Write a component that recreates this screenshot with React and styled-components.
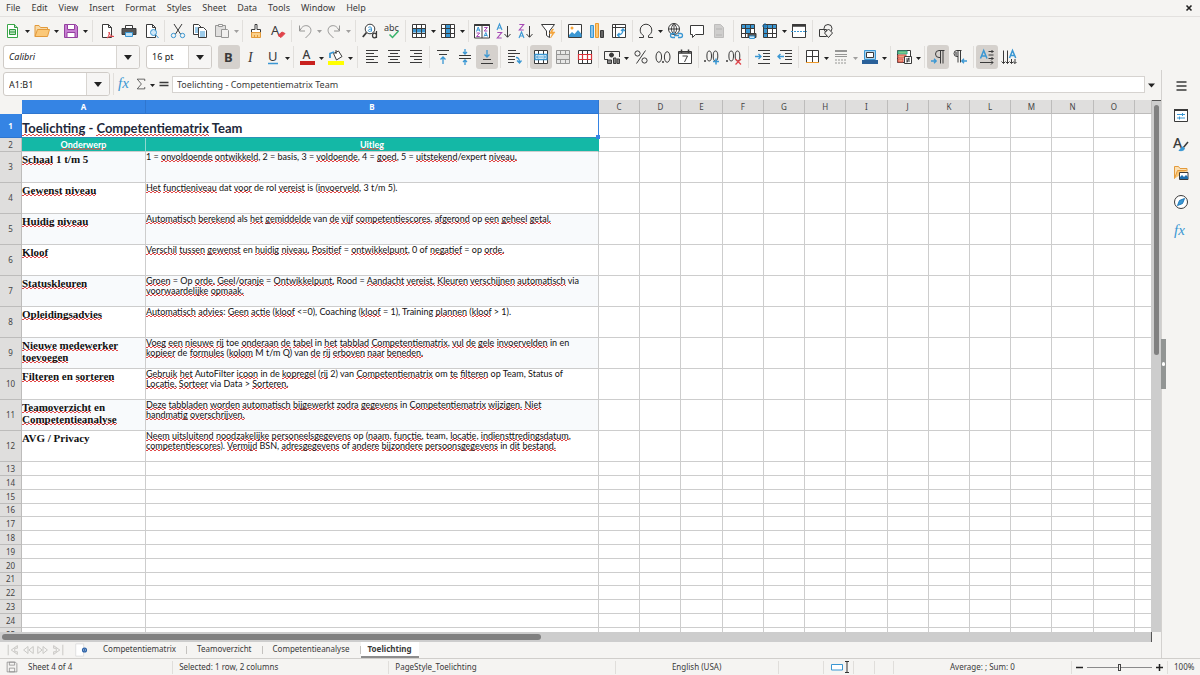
import React from "react";
import styled, { createGlobalStyle, css } from "styled-components";

const ui = '"Noto Sans", "Open Sans", sans-serif';
const ink = "#3a3a3a";
const blue = "#3a97d3";
const line = "#cdcdcd";

const Global = createGlobalStyle`
  *, *::before, *::after { box-sizing: border-box; }
  body { margin: 0; background: #f5f4f2; color: ${ink}; font: 9px/12px ${ui}; overflow: hidden; }
  button, input, select { font: inherit; color: inherit; margin: 0; }
  button { border: 0; padding: 0; background: none; }
  svg { overflow: visible; }
`;

const Window = styled.div`
  display: flex;
  flex-direction: column;
  height: 100vh;
`;

const MenuBar = styled.nav`
  display: flex;
  align-items: center;
  height: 17px;
  padding: 0 5px 0 1px;
  border-bottom: 1px solid #e3e1df;
`;

const MenuItem = styled.button`
  padding: 0 6px 0 5px;
`;

const CloseButton = styled.button`
  margin-left: auto;
  width: 12px;
  height: 12px;
  display: flex;
  align-items: center;
  justify-content: center;
`;

const Toolbar = styled.div`
  display: flex;
  align-items: center;
  height: ${(p) => p.$height}px;
  padding-left: ${(p) => p.$inset}px;
`;

const ToolButton = styled.button`
  display: flex;
  flex: none;
  align-items: center;
  justify-content: center;
  width: ${(p) => p.$width || 22}px;
  height: 24px;
  border-radius: 3px;
  background: ${(p) => (p.$pressed ? "#d5d1cd" : "none")};
  opacity: ${(p) => (p.$faded ? 0.5 : 1)};
`;

const ArrowButton = styled.button`
  flex: none;
  display: flex;
  align-items: center;
  justify-content: center;
  width: 7px;
  height: 24px;
  padding-top: 2px;
  opacity: ${(p) => (p.$faded ? 0.4 : 1)};
`;

const Separator = styled.span`
  flex: none;
  width: ${(p) => (p.$wide ? 7 : 5)}px;
  height: 22px;
  background: linear-gradient(#e1dfdc, #e1dfdc) center / 1px 100% no-repeat;
`;

const ComboBox = styled.label`
  position: relative;
  flex: none;
  width: ${(p) => p.$width}px;
  height: 24px;
  margin-right: ${(p) => p.$gap || 0}px;
  border: 1px solid #cfcbc7;
  border-radius: 3px;
  background: #fff;
  overflow: hidden;

  select, input {
    appearance: none;
    width: 100%;
    height: 100%;
    padding: 0 24px 0 5px;
    border: 0;
    outline: 0;
    background: none;
    color: #222;
    font-style: ${(p) => (p.$italic ? "italic" : "normal")};
  }
`;

const ComboArrow = styled.span`
  position: absolute;
  inset: 0 0 0 auto;
  width: 23px;
  display: flex;
  align-items: center;
  justify-content: center;
  border-left: 1px solid #d8d5d1;
  background: #f6f5f4;
  pointer-events: none;
`;

const Body = styled.div`
  display: flex;
  flex: 1;
  min-height: 0;
`;

const Main = styled.main`
  display: flex;
  flex: 1;
  flex-direction: column;
  min-width: 0;
`;

const FormulaBar = styled.div`
  display: flex;
  align-items: center;
  height: 30px;
  padding: 0 6px 2px 3px;
`;

const FormulaInput = styled.input`
  flex: 1;
  min-width: 0;
  height: 17px;
  padding: 0 4px;
  margin-right: 3px;
  border: 1px solid #d6d3d0;
  outline: 0;
  background: #fff;
`;

const SheetArea = styled.div`
  display: flex;
  flex: 1;
  min-height: 0;
`;

const SheetView = styled.div`
  flex: 1;
  min-width: 0;
  overflow: hidden;
  background: #fff;
`;

const Grid = styled.table`
  width: 100%;
  table-layout: fixed;
  border-collapse: separate;
  border-spacing: 0;
`;

const Col = styled.col`
  width: ${(p) => p.$width}px;
`;

const Corner = styled.td`
  padding: 0;
  background: #f5f4f2;
`;

const headCell = css`
  padding: 0;
  border: 0 solid ${(p) => (p.$active ? "#2f76cf" : "#bdbcbb")};
  border-width: 0 1px 1px 0;
  background: ${(p) => (p.$active ? "#3584e4" : "#dfdedd")};
  color: ${(p) => (p.$active ? "#fff" : "#444")};
  font-weight: ${(p) => (p.$active ? 700 : 400)};
  text-align: center;
  overflow: hidden;
`;

const ColumnHead = styled.th`
  ${headCell}
  height: 14px;
  font-size: 8px;
  line-height: 12px;
`;

const RowHead = styled.th`
  ${headCell}
  height: ${(p) => p.$height}px;
  font-size: 8px;
  line-height: 12px;
`;

const Cell = styled.td`
  padding: 0;
  border: 0 solid ${line};
  border-width: 0 1px 1px 0;
  overflow: hidden;
`;

const TitleCell = styled(Cell)`
  position: relative;
  border-right: 1px solid #3584e4;
  border-bottom-color: #2a93b8;
  padding: 6px 0 0 0;
  overflow: visible;
  vertical-align: top;
  color: #1e293b;
  font: 700 13px/17px Lato, sans-serif;
  white-space: nowrap;

  &::after {
    content: "";
    position: absolute;
    right: -2px;
    bottom: -2px;
    width: 4px;
    height: 4px;
    background: #3584e4;
  }
`;

const BandCell = styled(Cell)`
  border-right-color: ${(p) => (p.$divided ? "#8fd8cf" : "#14b8a6")};
  background: #14b8a6;
  color: #fff;
  font: 700 9px/12px Lato, sans-serif;
  text-align: center;
`;

const TopicCell = styled(Cell)`
  padding: 1px 0 0 0;
  vertical-align: top;
  background: ${(p) => (p.$striped ? "#f8fafc" : "#fff")};
  color: #111;
  font: 700 11px/12px "Liberation Serif", serif;
  white-space: nowrap;
`;

const TextCell = styled(Cell)`
  padding: 0;
  vertical-align: top;
  background: ${(p) => (p.$striped ? "#f8fafc" : "#fff")};
  color: #111;
  font: 9px/10px Lato, sans-serif;
  white-space: nowrap;
`;

const Misspelt = styled.span`
  background:
    linear-gradient(90deg, #e04848 50%, transparent 50%) 0 100% / 4px 1px repeat-x,
    linear-gradient(90deg, #e04848 50%, transparent 50%) 2px calc(100% - 1px) / 4px 1px repeat-x;
`;

const VerticalTrack = styled.div`
  width: 9px;
  padding: 0 2px;
  border-top: 1px solid #555;
  background: #cdcdcd;
`;

const HorizontalTrack = styled.div`
  flex: none;
  height: 10px;
  margin-right: 9px;
  padding: 2px;
  border-right: 1px solid #555;
  background: #cdcdcd;
`;

const Thumb = styled.div`
  width: ${(p) => p.$width};
  height: ${(p) => p.$height};
  margin-top: ${(p) => p.$top || 0}px;
  border-radius: 3px;
  background: #808080;
`;

const TabBar = styled.div`
  display: flex;
  flex: none;
  align-items: stretch;
  height: 16px;
  padding-left: 5px;
  font-size: 8px;
`;

const NavButton = styled.button`
  display: flex;
  align-items: center;
  justify-content: center;
  width: 15px;
`;

const AddSheet = styled.button`
  display: flex;
  align-items: center;
  width: 28px;
  padding-left: 9px;
`;

const SheetTab = styled.button`
  padding: 0 ${(p) => (p.$active ? 7 : 10)}px;
  border-bottom: 2px solid ${(p) => (p.$active ? "#8d8d8d" : "transparent")};
  font-weight: ${(p) => (p.$active ? 700 : 400)};
  background: ${(p) => (p.$active ? "#fff" : "none")};
`;

const TabDivider = styled.span`
  width: 1px;
  height: 8px;
  margin-top: 4px;
  background: #c4c2bf;
`;

const Sidebar = styled.aside`
  position: relative;
  display: flex;
  flex: none;
  flex-direction: column;
  align-items: center;
  gap: 5px;
  width: 39px;
  padding-top: 4px;
  border-left: 1px solid #d3d1cf;
`;

const SideHandle = styled.button`
  position: absolute;
  left: -1px;
  top: calc(50% - 25px);
  width: 5px;
  height: 50px;
  background: #929594;
  color: #fff;

  &::before {
    content: "";
    display: block;
    width: 3px;
    height: 4px;
    margin: 0 auto;
    border-radius: 2px;
    background: #fff;
  }
`;

const StatusBar = styled.footer`
  display: grid;
  flex: none;
  grid-template-columns: 22px 151fr 216fr 226fr 163fr 45fr 30fr 21fr 19fr 178fr 96px 32px;
  align-items: center;
  height: 17px;
  border-top: 1px solid #d0cecb;
  font-size: 8px;
`;

const StatusField = styled.div`
  display: flex;
  align-items: center;
  justify-content: ${(p) => (p.$center ? "center" : "flex-start")};
  height: 13px;
  padding-left: ${(p) => (p.$center ? 0 : 6)}px;
  border-right: 1px solid ${(p) => (p.$open ? "transparent" : "#e0dedb")};
  white-space: nowrap;
`;

const ZoomGroup = styled.div`
  display: flex;
  align-items: center;
  justify-content: center;
  gap: 4px;
  height: 13px;
  border-right: 1px solid #e0dedb;
`;

const ZoomButton = styled.button`
  width: 7px;
  height: 12px;
  display: flex;
  align-items: center;
`;

const ZoomSlider = styled.input`
  appearance: none;
  width: 65px;
  height: 8px;
  background: linear-gradient(#8b8b8b, #8b8b8b) center / 100% 1px no-repeat;

  &::-webkit-slider-thumb {
    appearance: none;
    width: 3px;
    height: 7px;
    border: 1px solid #444;
    background: #f5f4f2;
  }
`;

const Svg = ({ size = 16, children }) => (
  <svg width={size} height={size} viewBox="0 0 16 16" fill="none" stroke={ink} strokeWidth="1" aria-hidden="true">
    {children}
  </svg>
);

const Letter = ({ x, y, size, color = ink, weight = 400, family = "Noto Sans", italic, children }) => (
  <text x={x} y={y} fontSize={size} fill={color} stroke="none" fontWeight={weight} fontFamily={family} fontStyle={italic ? "italic" : "normal"}>
    {children}
  </text>
);

const Triangle = ({ size = 5 }) => (
  <svg width={size} height={size === 5 ? 3 : 5} viewBox="0 0 10 6" aria-hidden="true">
    <path d="M0 0h10L5 6z" fill="#222" />
  </svg>
);

const page = <path d="M3.5 1.5h6l3 3v10h-9z M9.5 1.5v3h3" fill="#fff" />;
const sheetLines = "M1.5 1.5h13v13h-13z M1.5 5.5h13 M1.5 10.5h13 M5.5 1.5v13 M10.5 1.5v13";
const grid = <path d={sheetLines} />;
const paper = <path d="M1.5 1.5h13v13h-13z" fill="#fff" stroke="none" />;

const icons = {
  new: <><path d="M2.5 1.5h7l3 3v10h-10z" fill="#fff" stroke="#3aa648" /><path d="M9.5 1.5v3h3M4.5 6.5h6v5h-6zM4.5 9h6" stroke="#2f9a3f" fill="#b9e3bf" /></>,
  open: <><path d="M1 13.5V2.5h4l1.5 2H13.5V7" stroke="#e39a3b" fill="#f7d9a6" /><path d="M1 13.5L3.5 6.5h12L13.5 13.5z" stroke="#e39a3b" fill="#fbc878" /></>,
  save: <><path d="M1.5 1.5h11l2 2v11h-13z" fill="#c77ed2" stroke="#94409f" /><path d="M4.5 1.5h7v5h-7z M4 9.5h8v5H4z" fill="#fff" stroke="#94409f" /></>,
  pdf: <>{page}<path d="M8 15c2-2 2.5-4 2-6 .5 3 2 4.5 5 4.5-3-.5-5 0-7 1.5z" stroke="#e0444b" fill="#fff" /></>,
  print: <><path d="M4.5 2.5h7v3h-7z" fill="#fff" /><path d="M1 5.500h14v6H1z" fill="#555" /><path d="M4.5 9.5h7v4h-7z" fill="#bfe0f5" stroke={blue} /></>,
  preview: <>{page}<circle cx="10.5" cy="9.5" r="3" fill="#cfe7f8" stroke={blue} /><path d="M12.5 11.5L15.5 15" stroke={blue} /></>,
  cut: <><path d="M4 1l6.5 10M12 1L5.5 11" /><circle cx="3.5" cy="12.5" r="2.2" stroke={blue} /><circle cx="12.5" cy="12.5" r="2.2" stroke={blue} /></>,
  copy: <><path d="M1.5 1.5h5l2.5 2.5v7.5H1.500z" fill="#fff" /><path d="M6.5 4.5h5l3 3v7h-8z" fill="#fff" /><path d="M3 5h3M3 7h3M3 9h3M8 9h5M8 11h5M8 13h5" stroke={blue} /></>,
  paste: <><path d="M1.5 2.5h10v11h-10z" fill="#ccc" /><path d="M4.5 1.5h4v2h-4z" fill="#fff" /><path d="M7.5 6.5h6l1 1v7h-7z" fill="#eee" /></>,
  clone: <><path d="M7 1.5h2v5h3.500v3h-9v-3H7z" fill="#fff" /><path d="M3.5 9.5h9v5h-9z" fill="#fbd08a" stroke="#e39a3b" /><path d="M6.5 12v2.5M9.5 12v2.5" stroke="#e39a3b" /></>,
  clear: <><Letter x="1" y="12" size="13">A</Letter><path d="M8 12.5l4-3.500 3 1.500-4 4z" fill="#e0444b" stroke="#e0444b" /></>,
  undo: <path d="M2.5 2.5v5.500h5.500M3 7.500c2-4.500 5-5.500 8-4.500s4 5 1.500 8L8.500 15" />,
  redo: <path d="M13.5 2.500v5.500H8M13 7.500c-2-4.500-5-5.500-8-4.500s-4 5-1.500 8L7.500 15" />,
  find: <><circle cx="8" cy="6" r="4.8" fill="#fff" /><path d="M4.5 9.5L.8 14" strokeWidth="1.8" /><path d="M6.300 4.500c1-1 3.200-.8 3.200.8V8.500M9.500 6c-3.500-.2-4 2.500-2 2.500 1 0 2-.7 2-1.500" stroke={blue} /><path d="M14.500 8v7M14.500 12.500a2 2.300 0 1 0-4 0 2 2.300 0 1 0 4 0" strokeWidth="1.200" /></>,
  spell: <><Letter x="0" y="7.5" size="9">abc</Letter><path d="M5.5 11.5l3 3 6-6.500" stroke="#38b36b" strokeWidth="1.5" /></>,
  row: <>{paper}<path d="M1.5 5.5h13v3.500h-13z" fill={blue} stroke={blue} />{grid}</>,
  column: <>{paper}<path d="M6 1.5h3.500v13H6z" fill={blue} stroke={blue} />{grid}</>,
  sort: <><path d="M.5 1.5h15v13.5H.5z M8 2v13" fill="#fff" /><path d="M.5 2h15" strokeWidth="2" /><path d="M2.500 8.500l1.700-4.500L6 8.500M3 7h2.500M10 13.500L11.800 9.500l1.700 4M10.500 12.500h2.500" stroke={blue} /><path d="M2.500 10h3.200l-3.200 3.500h3.200M10.200 4.500h3.200l-3.200 3.500h3.200" stroke="#a64ab5" /></>,
  ascending: <><path d="M1 7l2.500-6L6 7M1.800 5h3.400" stroke={blue} strokeWidth="1.100" /><path d="M1.300 9.500h4.400L1.300 15h4.400" stroke="#a64ab5" strokeWidth="1.100" /><path d="M11.5 3v11M8.500 11l3 3.3 3-3.3" /></>,
  descending: <><path d="M1 15l2.500-6L6 15M1.800 13h3.400" stroke={blue} strokeWidth="1.100" /><path d="M1.300 1.500h4.400L1.300 7h4.400" stroke="#a64ab5" strokeWidth="1.100" /><path d="M11.5 3v11M8.500 11l3 3.300 3-3.300" /></>,
  filter: <><path d="M1.5 1.5h13L9.5 8v6.5l-3-2V8z" fill="#fff" /><path d="M12.5 6l-3 4.500h3l-2 4.500 4.500-6h-3l1.500-3z" fill="#f7a53b" stroke="#ee9a2b" strokeWidth=".5" /></>,
  image: <><path d="M1.5 1.5h13v13h-13z" fill="#fff" /><circle cx="5" cy="5" r="1.5" fill="#f7a53b" stroke="none" /><path d="M2 14v-2l3-3 2.5 2L11 7l3.5 4v3z" fill={blue} stroke="none" /></>,
  chart: <><path d="M1.5 2.500h3v12h-3z" fill="#8cc4ea" stroke={blue} /><path d="M6.5 .5h3v14h-3z" fill="#fbc878" stroke="#ee9a2b" /><path d="M11.5 7.500h3v7h-3z" fill="#666" /></>,
  pivot: <><path d="M1.5 1.5h13v13h-13z M1.5 4.5h13 M4.5 1.5v13" fill="#fff" /><path d="M12 6.5C12 10 10 12 6.5 12M10 8l2-2 2 2M8.5 10l-2 2 2 2" stroke={blue} strokeWidth="1.3" /></>,
  omega: <path d="M1 14.5h4.5v-2C3.5 11.5 2.2 9.5 2.2 7a5.800 5.800 0 0 1 11.600 0c0 2.500-1.300 4.500-3.300 5.500v2H15" />,
  link: <><circle cx="7" cy="6" r="5.5" fill="#fff" /><path d="M1.5 6h11M7 .5v11M7 .5C3.5 4 3.5 8 7 11.5M7 .5c3.500 3.500 3.500 7.500 0 11" /><path d="M8 10.5H5.5a2 2 0 0 0 0 4H8M11 10.5h2.500a2 2 0 0 1 0 4H11M7 12.5h5" stroke={blue} strokeWidth="1.3" /></>,
  comment: <path d="M1.5 2.5h13v9h-8l-3 3v-3h-2z" fill="#fff" />,
  header: <><path d="M3.5 1.5h6l3 3v10h-9z" fill="#aaa" stroke="#888" /><path d="M5 6h6M5 12h6" stroke="#777" /></>,
  area: <>{paper}<path d="M1.5 1.500h13v4h-13zM5.500 5.500h5v5h-5z" fill={blue} stroke="none" />{grid}<path d="M8 10.500h8v4H8z" fill="#555" /><path d="M9.5 13h5v2.5h-5z" fill="#cfe7f8" stroke={blue} /></>,
  freeze: <>{paper}<path d="M1.5 1.500h13v4h-13zM1.500 5.500h4v9h-4z" fill={blue} stroke="none" />{grid}<path d="M3 0v6M0 3h6" stroke="#1f78b8" /></>,
  split: <><path d="M1.5 1.5h13v13h-13z" fill="#fff" /><path d="M1 2.500h14" strokeWidth="2.5" /><path d="M0 8.5h16" stroke={blue} strokeDasharray="2 1" /></>,
  shapes: <><path d="M1.5 6.5h7v7h-7z" /><circle cx="10" cy="5.5" r="4" /><path d="M10.5 6l4 4-4 4.5-4-4.500z" fill="#f5f4f2" /></>,
  bold: <Letter x="3" y="13" size="13" weight="700">B</Letter>,
  italic: <Letter x="5" y="13" size="14" family="Liberation Serif" italic>I</Letter>,
  underline: <><Letter x="3" y="12" size="13">U</Letter><path d="M3 14.5h10" stroke={blue} strokeWidth="1.5" /></>,
  fontColor: <><Letter x="3.5" y="10" size="12" weight="500">A</Letter><path d="M1 14h15" stroke="#c9211e" strokeWidth="4" /></>,
  highlight: <><path d="M5.5 4.5l5-2.500 3.500 5.500-5.500 3.500z M8 1v4" fill="#fff" /><path d="M2 9V4.500L6 3" stroke={blue} strokeWidth="1.8" /><path d="M0 14h16" stroke="#ffff00" strokeWidth="4" /></>,
  left: <path d="M2 1.5h12M2 4.5h8M2 7.5h12M2 10.5h8M2 13.5h12" />,
  center: <path d="M2 1.5h12M4 4.5h8M2 7.5h12M4 10.5h8M2 13.5h12" />,
  right: <path d="M2 1.5h12M6 4.5h8M2 7.5h12M6 10.5h8M2 13.5h12" />,
  top: <><path d="M2 1.5h12M4 5.5h8" /><path d="M8 15V8M5.500 10.500L8 8l2.500 2.500" stroke={blue} strokeWidth="1.3" /></>,
  middle: <><path d="M2 6.5h12M2 9.5h12" /><path d="M8 0v5M6 3l2 2 2-2M8 16v-5M6 13l2-2 2 2" stroke={blue} strokeWidth="1.3" /></>,
  bottom: <><path d="M2 14.5h12M4 10.5h8" /><path d="M8 1v7M5.500 5.500L8 8l2.500-2.500" stroke={blue} strokeWidth="1.3" /></>,
  wrap: <><path d="M2 1.5h8M2 4.5h12M2 7.5h7M2 10.5h7M2 13.5h6" /><path d="M10 8.500c3 0 3.500 2 3.500 5M11 11.500l2.500 2.500 2-2.500" stroke={blue} strokeWidth="1.3" /></>,
  merge: <><path d={sheetLines} fill="#fff" /><path d="M2 5.500h12v5H2z" fill="#fff" stroke={blue} strokeWidth="1.3" /><path d="M3.5 8h9M5 6.500L3.5 8 5 9.500M11 6.500L12.500 8 11 9.500" stroke={blue} /></>,
  mergeCells: <><path d={sheetLines} fill="#ddd" /><path d="M2 6h12v4H2z" fill="#ccc" stroke="none" /></>,
  unmerge: <><path d="M1.5 1.5h13v13h-13z M5.5 1.5v13M10.5 1.5v13" fill="#fff" /><path d="M1.5 5.5h13v5h-13z M5.5 5.5v5M10.5 5.5v5" stroke="#d9333a" strokeWidth="1.2" /></>,
  currency: <><path d="M15.5 8V2.500H.5v8H4" /><circle cx="7.5" cy="6" r="2" fill={ink} /><path d="M3.5 11h4v3.500h-4z M9.5 9h2.500v5.500H9.500z M13 10h2.500v4.500H13z" fill="#888" /></>,
  percent: <><circle cx="4.5" cy="4.5" r="2.6" /><circle cx="11.5" cy="11.5" r="2.6" /><path d="M12.5 1.5l-9 13" /></>,
  number: <><ellipse cx="3.8" cy="8" rx="2.8" ry="5.3" /><ellipse cx="12.2" cy="8" rx="2.8" ry="5.3" /><path d="M8 12v2" strokeWidth="1.5" /></>,
  date: <><path d="M1.5 2.5h13v12h-13z" fill="#fff" /><path d="M1.5 4h13M4.5 .5v3M11.5 .5v3" strokeWidth="1.5" /><path d="M5.5 7h5l-3 6" /></>,
  addDecimal: <><ellipse cx="5.2" cy="7" rx="2.3" ry="5" /><ellipse cx="11.5" cy="7" rx="2.3" ry="5" /><path d="M1 11v2" strokeWidth="1.5" /><path d="M12 9.500v6M9 12.500h6" stroke={blue} strokeWidth="1.5" /></>,
  removeDecimal: <><ellipse cx="5.2" cy="7" rx="2.3" ry="5" /><ellipse cx="11.5" cy="7" rx="2.3" ry="5" /><path d="M1 11v2" strokeWidth="1.5" /><path d="M9.5 10l5.500 5.500M15 10l-5.500 5.500" stroke="#e0444b" strokeWidth="1.3" /></>,
  indent: <><path d="M3 1.5h12M8 4.5h7M8 7.5h7M8 10.5h7M3 14.5h12" /><path d="M0 7.5h6M3.500 5L6 7.500 3.500 10" stroke={blue} strokeWidth="1.3" /></>,
  outdent: <><path d="M3 1.5h12M8 4.5h7M8 7.5h7M8 10.5h7M3 14.5h12" /><path d="M7 7.500H.5M3.500 5L1 7.500 3.500 10" stroke={blue} strokeWidth="1.3" /></>,
  borders: <><path d="M2.5 1.5h12v12h-12z M2.5 7.5h12M8.5 1.5v12" fill="#fff" /><path d="M2 13.5h13" stroke="#ee9a2b" /></>,
  borderStyle: <><path d="M2 2h12" strokeWidth="2" /><path d="M2 5.500h12M2 7.500h12" /><path d="M2 11h12M2 14h12" strokeDasharray="2 1" /></>,
  background: <><path d="M2.5 1.5h11v9h-11z" fill="#a9d3f0" stroke={blue} /><path d="M4.5 3.5h7v5h-7z" fill="#fff" /><path d="M0 13h16" stroke="#2a6099" strokeWidth="4" /></>,
  conditional: <><path d="M1.5 1.5h13v12h-13z" fill="#fff" /><path d="M2 2h9v3H2z" fill="#7cc98a" stroke="#3a8" /><path d="M2 6h8v3H2zM2 10h5v3H2z" fill="#f0a080" stroke="#d9534a" /><path d="M8.5 7.500h7v7h-7z" fill="#fff" /><path d="M10 10h4M10 12h4M13 8.500l-2 5" /></>,
  ltr: <><path d="M14.5 1.5H9a3.500 3.500 0 0 0 0 7h1M10.5 1.5v13M13 1.5v13" /><path d="M1 12h5M4 9.800L6.200 12 4 14.200" stroke={blue} strokeWidth="1.3" /></>,
  rtl: <><path d="M9.5 1.5H5a3 3 0 0 0 0 6h1M6 1.5v12M8.5 1.5v12" /><path d="M2.5 3h3v4h-2z" fill="#888" stroke="none" /><path d="M15 12h-5M12 9.800L9.800 12l2.200 2.200" stroke={blue} strokeWidth="1.3" /></>,
  horizontal: <><path d="M1.500 9.500L4.700 1.500 8 9.500M2.500 7h4.500" stroke={blue} strokeWidth="1.500" /><path d="M9.5 2.5h5M9.5 6h5M9.5 9.5h5M1 13.5h13M12.5 1l1.500 1.500L12.500 4M12.500 8l1.500 1.500-1.500 1.500M12 11.500l2 2-2 2" /></>,
  vertical: <><path d="M8.500 9L11.500 1.500 14.700 9M9.500 6.500h4" stroke={blue} strokeWidth="1.500" /><path d="M2.5 1.5v13M6.5 1.5v13M10.5 10v4.500M14 10v4.500M.5 12.500l2 2 2-2M5 13l1.500 1.500L8.500 12.500M9 13l1.500 1.500 1.700-1.700L14 14.500l1.500-1.500" /></>,
  function: <Letter x="1" y="12" size="15" color={blue} family="Liberation Serif" italic>fx</Letter>,
  sum: <path d="M13 4V1.500H3L8.500 8 3 14.500h10V12" />,
  equals: <path d="M3.5 6.500h9M3.5 9.500h9" strokeWidth="1.5" />,
  menu: <path d="M3.5 4h10M3.5 8h10M3.5 12h10" strokeWidth="1.5" />,
  properties: <><path d="M1.5 2.500h13v12h-13z" fill="#fff" /><path d="M1 3h14" strokeWidth="2" /><path d="M4 7.500h8M4 11h8M9.500 6v3M6.500 9.500v3" stroke={blue} /></>,
  stylist: <><Letter x="0" y="12" size="14" weight="500">A</Letter><path d="M15 6l-5 6" strokeWidth="1.5" /><path d="M10 11c-2 0-2 2-4 3.500 3 .5 5 0 5.500-2z" fill={blue} stroke={blue} /></>,
  gallery: <><path d="M1.5 13.500v-12h4l1.500 2h7v3" fill="#fbe0b4" stroke="#e39a3b" /><path d="M1.5 13.500l3-8h9" stroke="#e39a3b" fill="#fbc878" /><path d="M6.5 7.500h8.500v7H6.500z" fill="#fff" /><path d="M7 14v-2l2-2 2 2 2-2 2 2v2z" fill="#1f6fae" stroke="none" /></>,
  navigator: <><circle cx="8" cy="8" r="6.5" fill="#fff" /><path d="M11.5 4.500l-2 5-5 2 2-5z" fill={blue} stroke="#1f78b8" /></>,
  document: <path d="M1.5 1.500h11l2 2v11h-13z M4.5 1.500h7v4h-7z M4.500 9.500h7v5h-7z" stroke="#888" />,
};

const ActionIcon = ({ name, size }) => <Svg size={size}>{icons[name]}</Svg>;

// Toolbar entries: [icon, label, options]; "|" and "||" are narrow and wide separators.
const standardTools = [
  ["new", "New", { menu: true }], ["open", "Open", { menu: true }], ["save", "Save", { menu: true }], "||",
  ["pdf", "Export as PDF"], ["print", "Print"], ["preview", "Print Preview"], "|",
  ["cut", "Cut"], ["copy", "Copy"], ["paste", "Paste", { menu: true, faded: true }], "|",
  ["clone", "Clone Formatting"], ["clear", "Clear Formatting"], "|",
  ["undo", "Undo", { menu: true, faded: true }], ["redo", "Redo", { menu: true, faded: true }], "||",
  ["find", "Find and Replace"], ["spell", "Spelling"], "|",
  ["row", "Row", { menu: true }], ["column", "Column", { menu: true }], "|",
  ["sort", "Sort"], ["ascending", "Sort Ascending"], ["descending", "Sort Descending"], ["filter", "AutoFilter"], "|",
  ["image", "Insert Image"], ["chart", "Insert Chart"], ["pivot", "Pivot Table"], "|",
  ["omega", "Special Character", { menu: true }], ["link", "Hyperlink"], ["comment", "Comment"], ["header", "Headers and Footers", { faded: true }], "||",
  ["area", "Print Area"], ["freeze", "Freeze Rows and Columns", { menu: true }], ["split", "Split Window"], "|",
  ["shapes", "Draw Functions"],
];

const formatTools = [
  ["bold", "Bold", { pressed: true }], ["italic", "Italic"], ["underline", "Underline", { menu: true }], "|",
  ["fontColor", "Font Color", { menu: true }], ["highlight", "Highlighting", { menu: true }], "||",
  ["left", "Align Left"], ["center", "Center"], ["right", "Align Right"], "|",
  ["top", "Align Top"], ["middle", "Center Vertically"], ["bottom", "Align Bottom", { pressed: true }], "|",
  ["wrap", "Wrap Text"], "|",
  ["merge", "Merge and Center", { pressed: true }], ["mergeCells", "Merge Cells", { faded: true }], ["unmerge", "Unmerge Cells"], "|",
  ["currency", "Currency", { menu: true }], ["percent", "Percent"], ["number", "Number"], ["date", "Date"], "|",
  ["addDecimal", "Add Decimal Place"], ["removeDecimal", "Delete Decimal Place"], "||",
  ["indent", "Increase Indent"], ["outdent", "Decrease Indent"], "|",
  ["borders", "Borders", { menu: true }], ["borderStyle", "Border Style", { menu: true, faded: true }], ["background", "Border Color", { menu: true }], "|",
  ["conditional", "Conditional", { menu: true }], "|",
  ["ltr", "Left-To-Right", { pressed: true }], ["rtl", "Right-To-Left"], "|",
  ["horizontal", "Text Direction Horizontal", { pressed: true }], ["vertical", "Text Direction Vertical"],
];

const Tools = ({ items }) =>
  items.map((item, i) => {
    if (typeof item === "string") return <Separator key={i} $wide={item === "||"} />;
    const [name, label, { menu, faded, pressed } = {}] = item;
    return (
      <React.Fragment key={name}>
        <ToolButton aria-label={label} aria-pressed={pressed} $pressed={pressed} $faded={faded}>
          <ActionIcon name={name} />
        </ToolButton>
        {menu && (
          <ArrowButton aria-label={`${label} options`} $faded={faded}>
            <Triangle />
          </ArrowButton>
        )}
      </React.Fragment>
    );
  });

// Words in square brackets carry the spelling underline.
const topics = [
  [["[Schaal] 1 t/m 5"], ["1 = [onvoldoende] [ontwikkeld], 2 = basis, 3 = [voldoende], 4 = [goed], 5 = [uitstekend]/expert [niveau.]"]],
  [["[Gewenst] [niveau]"], ["[Het] [functieniveau] dat [voor] de rol [vereist] is ([invoerveld], 3 t/m 5)."]],
  [["[Huidig] [niveau]"], ["[Automatisch] [berekend] als [het] [gemiddelde] van [de] [vijf] [competentiescores], [afgerond] op [een] [geheel] [getal.]"]],
  [["[Kloof]"], ["[Verschil] [tussen] [gewenst] en [huidig] [niveau.] [Positief] = [ontwikkelpunt], 0 of [negatief] = op [orde.]"]],
  [["[Statuskleuren]"], ["[Groen] = Op [orde.] [Geel]/[oranje] = [Ontwikkelpunt.] Rood = [Aandacht] [vereist.] [Kleuren] [verschijnen] [automatisch] via", "[voorwaardelijke] [opmaak.]"]],
  [["[Opleidingsadvies]"], ["[Automatisch] [advies]: [Geen] [actie] ([kloof] <=0), Coaching ([kloof] = 1), Training [plannen] ([kloof] > 1)."]],
  [["[Nieuwe] [medewerker]", "[toevoegen]"], ["[Voeg] [een] [nieuwe] [rij] toe [onderaan] [de] [tabel] in [het] [tabblad] [Competentiematrix], [vul] [de] [gele] [invoervelden] in en", "[kopieer] de [formules] ([kolom] M t/m Q) van [de] [rij] [erboven] [naar] [beneden.]"]],
  [["[Filteren] en [sorteren]"], ["[Gebruik] [het] AutoFilter [icoon] in de [kopregel] ([rij] 2) van [Competentiematrix] om [te] [filteren] op Team, Status of", "[Locatie.] [Sorteer] via Data > [Sorteren.]"]],
  [["[Teamoverzicht] en", "[Competentieanalyse]"], ["[Deze] [tabbladen] [worden] [automatisch] [bijgewerkt] [zodra] [gegevens] in [Competentiematrix] [wijzigen.] [Niet]", "[handmatig] [overschrijven.]"]],
  [["AVG / Privacy"], ["[Neem] [uitsluitend] [noodzakelijke] [personeelsgegevens] op ([naam], [functie], team, [locatie], [indiensttredingsdatum],", "[competentiescores]). [Vermijd] BSN, [adresgegevens] of [andere] [bijzondere] [persoonsgegevens] in [dit] [bestand.]"]],
];

const Checked = ({ lines }) =>
  lines.map((text, i) => (
    <React.Fragment key={text}>
      {i > 0 && <br />}
      {text.split(/(\[[^\]]+\])/).map((part, j) =>
        part.startsWith("[") ? <Misspelt key={j}>{part.slice(1, -1)}</Misspelt> : part
      )}
    </React.Fragment>
  ));

const otherColumns = [..."CDEFGHIJKLMNO", ""];
const Blanks = () => otherColumns.map((c, i) => <Cell key={i} />);
const emptyRows = Array.from({ length: 13 }, (_, i) => 13 + i);

const Sheet = () => (
  <Grid>
    <colgroup>
      <Col $width={22} />
      <Col $width={124} />
      <Col $width={453} />
      {[..."CDEFGHIJKLMNO"].map((c) => <col key={c} />)}
      <Col $width={17} />
    </colgroup>
    <thead>
      <tr>
        <Corner />
        <ColumnHead $active>A</ColumnHead>
        <ColumnHead $active>B</ColumnHead>
        {otherColumns.map((c, i) => <ColumnHead key={i}>{c}</ColumnHead>)}
      </tr>
    </thead>
    <tbody>
      <tr>
        <RowHead $height={24} $active>1</RowHead>
        <TitleCell colSpan={2}><Checked lines={["[Toelichting] - [Competentiematrix] Team"]} /></TitleCell>
        <Blanks />
      </tr>
      <tr>
        <RowHead $height={14}>2</RowHead>
        <BandCell $divided><Checked lines={["[Onderwerp]"]} /></BandCell>
        <BandCell><Checked lines={["[Uitleg]"]} /></BandCell>
        <Blanks />
      </tr>
      {topics.map(([topic, text], i) => (
        <tr key={i}>
          <RowHead $height={31}>{i + 3}</RowHead>
          <TopicCell $striped={i % 2 === 0}><Checked lines={topic} /></TopicCell>
          <TextCell $striped={i % 2 === 0}><Checked lines={text} /></TextCell>
          <Blanks />
        </tr>
      ))}
      {emptyRows.map((n) => (
        <tr key={n}>
          <RowHead $height={n % 5 === 1 ? 13 : 14}>{n}</RowHead>
          <Cell />
          <Cell />
          <Blanks />
        </tr>
      ))}
    </tbody>
  </Grid>
);

const menus = ["File", "Edit", "View", "Insert", "Format", "Styles", "Sheet", "Data", "Tools", "Window", "Help"];
const sheets = ["Competentiematrix", "Teamoverzicht", "Competentieanalyse", "Toelichting"];
const navPaths = {
  First: "M2.5 2v12M13 3L6 8l7 5v-3h-3V6h3z",
  Previous: "M8 4L3 8l5 4zM14 4L9 8l5 4z",
  Next: "M2 4l5 4-5 4zM8 4l5 4-5 4z",
  Last: "M13.5 2v12M3 3l7 5-7 5v-3h3V6H3z",
};

export default function App() {
  return (
    <Window>
      <Global />
      <MenuBar>
        {menus.map((m) => <MenuItem key={m}>{m}</MenuItem>)}
        <CloseButton aria-label="Close document">
          <svg width="6" height="6" viewBox="0 0 6 6" aria-hidden="true"><path d="M.5.5l5 5M5.5.5l-5 5" stroke="#222" strokeWidth="1.6" /></svg>
        </CloseButton>
      </MenuBar>
      <Toolbar $height={27} $inset={2}>
        <Tools items={standardTools} />
      </Toolbar>
      <Toolbar $height={26} $inset={3}>
        <ComboBox $width={137} $gap={6} $italic>
          <select aria-label="Font name"><option>Calibri</option></select>
          <ComboArrow><Triangle size={8} /></ComboArrow>
        </ComboBox>
        <ComboBox $width={66} $gap={6}>
          <select aria-label="Font size"><option>16 pt</option></select>
          <ComboArrow><Triangle size={8} /></ComboArrow>
        </ComboBox>
        <Tools items={formatTools} />
      </Toolbar>
      <Body>
        <Main>
          <FormulaBar>
            <ComboBox $width={107}>
              <input aria-label="Name box" defaultValue="A1:B1" />
              <ComboArrow><Triangle size={8} /></ComboArrow>
            </ComboBox>
            <Separator $wide />
            <ToolButton $width={16} aria-label="Function Wizard"><ActionIcon name="function" /></ToolButton>
            <ToolButton $width={16} aria-label="Select Function"><ActionIcon name="sum" size={12} /></ToolButton>
            <ArrowButton aria-label="Select Function options"><Triangle /></ArrowButton>
            <ToolButton $width={16} aria-label="Formula"><ActionIcon name="equals" /></ToolButton>
            <FormulaInput aria-label="Input line" defaultValue="Toelichting - Competentiematrix Team" />
            <ArrowButton aria-label="Expand Formula Bar"><Triangle size={7} /></ArrowButton>
          </FormulaBar>
          <SheetArea>
            <SheetView><Sheet /></SheetView>
            <VerticalTrack><Thumb $width="5px" $height="47%" $top={4} /></VerticalTrack>
          </SheetArea>
          <HorizontalTrack><Thumb $width="47%" $height="6px" /></HorizontalTrack>
          <TabBar>
            {Object.entries(navPaths).map(([label, d]) => (
              <NavButton key={label} aria-label={`${label} sheet`}>
                <Svg size={14}><path d={d} stroke="#c4c2bf" /></Svg>
              </NavButton>
            ))}
            <AddSheet aria-label="Add sheet">
              <Svg size={14}>
                <path d="M2 1h9v14H2z" fill="#fff" stroke="#ddd" />
                <circle cx="12" cy="8" r="2.2" stroke="#2b62a8" strokeWidth="1.5" fill="#fff" />
                <path d="M12 6.500v3M10.500 8h3" stroke="#2b62a8" />
              </Svg>
            </AddSheet>
            {sheets.map((s, i) => (
              <React.Fragment key={s}>
                {i > 0 && <TabDivider />}
                <SheetTab $active={i === 3}>{s}</SheetTab>
              </React.Fragment>
            ))}
          </TabBar>
        </Main>
        <Sidebar>
          <SideHandle aria-label="Hide sidebar" />
          {["menu", "properties", "stylist", "gallery", "navigator", "function"].map((n) => (
            <ToolButton key={n} aria-label={n}><ActionIcon name={n} /></ToolButton>
          ))}
        </Sidebar>
      </Body>
      <StatusBar>
        <StatusField $open><ActionIcon name="document" size={12} /></StatusField>
        <StatusField>Sheet 4 of 4</StatusField>
        <StatusField>Selected: 1 row, 2 columns</StatusField>
        <StatusField>PageStyle_Toelichting</StatusField>
        <StatusField $center>English (USA)</StatusField>
        <StatusField />
        <StatusField>
          <svg width="20" height="12" viewBox="0 0 20 12" fill="none" aria-hidden="true">
            <path d="M1.5 3.5h11v5.500h-11z" stroke={blue} fill="#fff" />
            <path d="M15 .5h4M17 .5v11M15 11.5h4" stroke="#333" />
          </svg>
        </StatusField>
        <StatusField />
        <StatusField />
        <StatusField $center>Average: ; Sum: 0</StatusField>
        <ZoomGroup>
          <ZoomButton aria-label="Zoom out"><svg width="7" height="7" aria-hidden="true"><path d="M0 3.5h7" stroke="#222" strokeWidth="1.5" /></svg></ZoomButton>
          <ZoomSlider type="range" aria-label="Zoom" defaultValue="50" />
          <ZoomButton aria-label="Zoom in"><svg width="7" height="7" aria-hidden="true"><path d="M0 3.5h7M3.5 0v7" stroke="#222" strokeWidth="1.5" /></svg></ZoomButton>
        </ZoomGroup>
        <StatusField $open>100%</StatusField>
      </StatusBar>
    </Window>
  );
}
